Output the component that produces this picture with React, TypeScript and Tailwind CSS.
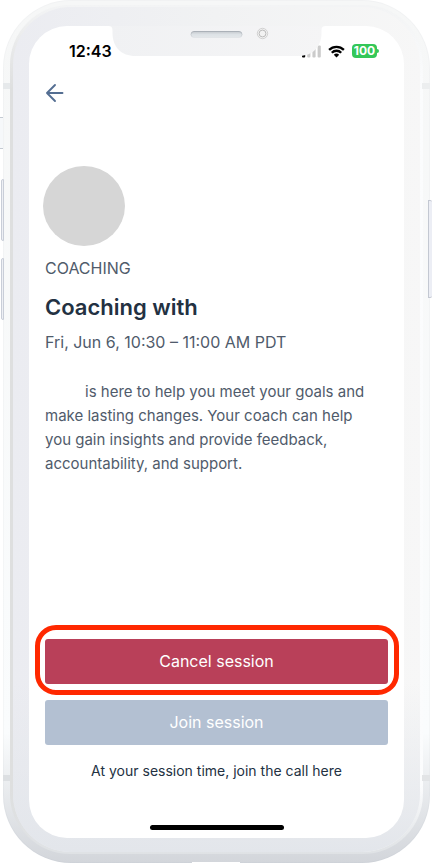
const PARAGRAPH =
  "is here to help you meet your goals and make lasting changes. Your coach can help you gain insights and provide feedback, accountability, and support.";

function BackIcon() {
  return (
    <svg
      width="20"
      height="20"
      viewBox="0 0 20 20"
      fill="none"
      stroke="#546e92"
      strokeWidth="1.9"
      strokeLinecap="round"
      strokeLinejoin="round"
      aria-hidden="true"
    >
      <path d="M17.5 10H2M10 2L2 10l8 8" />
    </svg>
  );
}

function SignalIcon() {
  return (
    <svg width="19" height="14" viewBox="0 0 19 14" aria-hidden="true">
      <rect x="0" y="9" width="3.2" height="4.5" rx="1" fill="#000" />
      <g fill="#cbcbcb">
        <rect x="5.2" y="6.5" width="3.2" height="7" rx="1" />
        <rect x="10.4" y="4" width="3.2" height="9.5" rx="1" />
        <rect x="15.6" y="1.5" width="3.2" height="12" rx="1" />
      </g>
    </svg>
  );
}

function WifiIcon() {
  return (
    <svg width="17" height="13" viewBox="0 0 17 13" aria-hidden="true">
      <g fill="none" stroke="#000" strokeWidth="2.3">
        <path d="M1.1 4.9a10.4 10.4 0 0 1 14.8 0" />
        <path d="M3.8 7.7a6.6 6.6 0 0 1 9.4 0" />
      </g>
      <path d="M8.5 12.4L5.8 9.7a3.9 3.9 0 0 1 5.4 0z" fill="#000" />
    </svg>
  );
}

function Notch() {
  return (
    <div className="absolute top-0 left-1/2 -translate-x-1/2">
      <svg width="219" height="30" viewBox="0 0 219 30" aria-hidden="true">
        <defs>
          <linearGradient id="notch" x1="0" x2="1">
            <stop offset="0" stopColor="#f0f1f3" />
            <stop offset="1" stopColor="#f5f5f6" />
          </linearGradient>
          <linearGradient id="speaker" x1="0" x2="0" y1="0" y2="1">
            <stop offset="0" stopColor="#c6cacf" />
            <stop offset="0.5" stopColor="#dde2e6" />
            <stop offset="1" stopColor="#e4e7ea" />
          </linearGradient>
          <linearGradient id="speakerEdge" x1="0" x2="0" y1="0" y2="1">
            <stop offset="0" stopColor="#abb1b8" />
            <stop offset="1" stopColor="#e2e5e8" />
          </linearGradient>
        </defs>
        <path
          d="M0 0c4 0 5 1 5 5v2c0 14 9 23 23 23h163c14 0 23-9 23-23V5c0-4 1-5 5-5z"
          fill="url(#notch)"
        />
        <rect
          x="83.5"
          y="5.5"
          width="51"
          height="6"
          rx="3"
          fill="url(#speaker)"
          stroke="url(#speakerEdge)"
        />
        <circle cx="155" cy="7.5" r="5.2" fill="#f0f0f0" stroke="#d2d2d2" />
        <circle cx="155" cy="7.5" r="3.4" fill="#f2f2f2" stroke="#bcbcbc" />
      </svg>
    </div>
  );
}

function StatusBar() {
  return (
    <div className="flex h-[50px] items-center justify-between pr-[25px] pl-10">
      <span className="text-base leading-6 font-semibold text-black">12:43</span>
      <div className="flex items-center gap-[7px]">
        <SignalIcon />
        <WifiIcon />
        <div className="flex items-center">
          <span className="w-[25px] rounded-[4px] bg-[#34c759] text-center text-xs leading-[14px] font-bold text-white">
            100
          </span>
          <span className="h-1 w-0.5 rounded-r-full bg-[#34c759]" />
        </div>
      </div>
    </div>
  );
}

function FrameDetails() {
  return (
    <div aria-hidden="true">
      {/* antenna bands */}
      <div className="absolute top-[83px] left-[3px] h-[6px] w-[7px] bg-[#e6e9eb]" />
      <div className="absolute bottom-[82px] left-[3px] h-[6px] w-[7px] bg-[#dcdfe2]" />
      <div className="absolute top-[83px] right-[2px] h-[6px] w-2 bg-[#eceeef]" />
      <div className="absolute right-[2px] bottom-[82px] h-[6px] w-2 bg-[#e2e4e6]" />
      {/* side buttons */}
      <div className="absolute top-[117px] left-0 h-8 w-[3px] border-y border-[#c4cad2] bg-[#f6f8fa]" />
      <div className="absolute top-[179px] left-px h-[62px] w-[3px] rounded-l-xs border border-[#c9ced8] bg-[#eef0f5]" />
      <div className="absolute top-[258px] left-px h-[62px] w-[3px] rounded-l-xs border border-[#c9ced8] bg-[#eef0f5]" />
      <div className="absolute top-[200px] right-0 h-[98px] w-[4px] rounded-r-xs border border-r-0 border-[#c3c8d2] bg-[#eceef5]" />
      {/* charging port */}
      <div className="absolute bottom-0 left-1/2 h-px w-12 -translate-x-1/2 bg-white" />
    </div>
  );
}

export default function App() {
  return (
    <main className="relative flex min-h-screen flex-col bg-white pr-[2px] pl-[3px] font-['Inter','Liberation_Sans',sans-serif]">
      <div className="flex grow flex-col rounded-[68px] bg-linear-to-b from-[#f1f2f3] via-[#f4f6f7] via-85% to-[#ced2d8] p-px">
        <div className="flex grow flex-col rounded-[67px] bg-linear-to-b from-[#f6f7f7] from-0% via-[#fafcfd] via-85% to-[#d3d6db] px-[6px] pt-1 pb-2">
          <div className="flex grow flex-col rounded-[60px] bg-[linear-gradient(to_bottom,#f3f4f5,transparent_10%,transparent_92%,#dfe2e5),linear-gradient(to_right,#dedfdf,#fbfcfd)] px-[3px] pt-[2px] pb-[2px]">
            <div className="flex grow flex-col rounded-[58px] bg-linear-to-r from-[#ebecf1] via-[#f1f2f3] to-[#f7f7f7]">
              <div className="flex grow flex-col rounded-[58px] bg-linear-to-b from-transparent from-80% to-[#e3e6eb] px-4 pt-[19px] pb-[14px]">
                <div className="relative flex grow flex-col rounded-[38px] bg-white">
                  <StatusBar />
                  <Notch />
                  <div className="flex grow flex-col px-4">
                    <header className="flex h-[34px] items-center">
                      <button type="button" aria-label="Back">
                        <BackIcon />
                      </button>
                    </header>
                    <div className="mt-14 -ml-0.5 h-20 w-[82px] rounded-[50%] bg-[#d6d6d6]" />
                    <p className="mt-2.5 text-base leading-6 text-[#505b6b]">COACHING</p>
                    <h1 className="mt-[11px] text-[22px] leading-8 font-semibold text-[#233142]">
                      Coaching with
                    </h1>
                    <p className="mt-[7px] text-base leading-6 text-[#505b6b]">
                      Fri, Jun 6, 10:30 – 11:00 AM PDT
                    </p>
                    <p className="mt-[26px] pr-2 indent-10 text-[15px] leading-6 text-[#505b6b]">
                      {PARAGRAPH}
                    </p>
                    <div className="mt-auto flex flex-col gap-4">
                      <div className="relative">
                        <button
                          type="button"
                          className="block h-[45px] w-full rounded-[3px] bg-[#b94059] pb-0.5 text-base text-white"
                        >
                          Cancel session
                        </button>
                        <div className="pointer-events-none absolute -top-3.5 -right-[11px] -bottom-[11px] -left-2.5 rounded-[21px] border-[5px] border-[#ff2800]" />
                      </div>
                      <button
                        type="button"
                        className="block h-[45px] w-full rounded-[3px] bg-[#b3c0d2] pb-0.5 text-base text-white"
                      >
                        Join session
                      </button>
                      <p className="text-center text-sm leading-5 text-[#233142]">
                        At your session time, join the call here
                      </p>
                    </div>
                    <div className="mx-auto mt-11 mb-2 h-[5px] w-[134px] rounded-full bg-black" />
                  </div>
                </div>
              </div>
            </div>
          </div>
        </div>
      </div>
      <FrameDetails />
    </main>
  );
}
